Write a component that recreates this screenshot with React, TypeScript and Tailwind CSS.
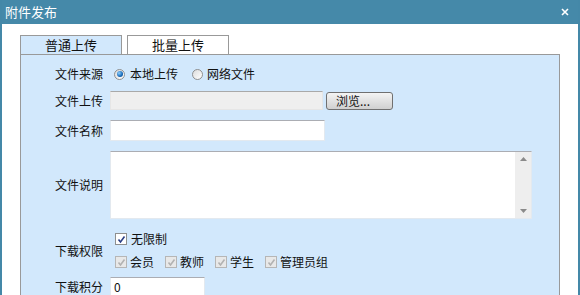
import React from "react";

const font = { fontFamily: '"Noto Sans CJK SC", "Noto Sans", sans-serif' };

const Radio = ({ checked }: { checked?: boolean }) => (
  <span className="flex h-[11px] w-[11px] shrink-0 items-center justify-center rounded-full border border-[#8f8f8f] bg-gradient-to-br from-[#dcdcdc] to-[#ffffff]">
    {checked && (
      <span className="h-[6px] w-[6px] rounded-full bg-[radial-gradient(circle_at_35%_35%,#8fd0ff,#1769b8_60%,#0b3f7a)]" />
    )}
  </span>
);

const Check = ({ disabled }: { disabled?: boolean }) => (
  <span
    className={`flex h-[12px] w-[12px] shrink-0 items-center justify-center border ${
      disabled ? "border-[#b6b6b6] bg-[#e8e8e8]" : "border-[#8e8f8f] bg-white"
    }`}
  >
    <svg width="9" height="9" viewBox="0 0 9 9">
      <path
        d="M1.5 4.5 L3.5 7 L7.5 1.5"
        fill="none"
        stroke={disabled ? "#b2b2b2" : "#2b3f86"}
        strokeWidth="1.6"
      />
    </svg>
  </span>
);

const Label = ({ children }: { children: React.ReactNode }) => (
  <div className="w-[89px] shrink-0 pr-[7px] text-right text-[12px] text-[#111]">{children}</div>
);

export default function App() {
  return (
    <div className="h-[295px] w-[580px] overflow-hidden bg-white" style={font}>
      <div className="flex h-[295px] flex-col border-x-2 border-[#4488a8]">
        {/* title bar */}
        <div className="flex h-[24px] shrink-0 items-center justify-between bg-[#4589a9] pl-[3px] pr-[9px]">
          <span className="text-[13px] text-white">附件发布</span>
          <svg width="8" height="8" viewBox="0 0 8 8">
            <path d="M1 1 L7 7 M7 1 L1 7" stroke="white" strokeWidth="1.6" />
          </svg>
        </div>

        <div className="pl-[18px] pt-[11px]">
          {/* tabs */}
          <div className="flex h-[19px] items-stretch">
            <div className="flex w-[102px] items-center justify-center border border-b-0 border-[#999] bg-[#d2e8fc] text-[13px] text-[#111]">
              普通上传
            </div>
            <div className="ml-[5px] flex w-[102px] items-center justify-center border border-b-0 border-[#999] bg-white text-[13px] text-[#111]">
              批量上传
            </div>
          </div>

          {/* panel */}
          <div className="h-[260px] w-[540px] border border-[#999] bg-[#d2e8fc] pt-[10px]">
            <div className="flex h-[18px] items-center">
              <Label>文件来源</Label>
              <div className="flex items-center text-[12px] text-[#111]">
                <span className="ml-[4px]">
                  <Radio checked />
                </span>
                <span className="ml-[5px]">本地上传</span>
                <span className="ml-[14px]">
                  <Radio />
                </span>
                <span className="ml-[4px]">网络文件</span>
              </div>
            </div>

            <div className="mt-[8px] flex h-[19px] items-center">
              <Label>文件上传</Label>
              <div className="h-[19px] w-[213px] border border-[#e6e6e6] border-t-[#a9a9a9] bg-[#efefef]" />
              <button className="ml-[3px] flex h-[18px] w-[67px] items-center rounded-[3px] border border-[#707070] bg-gradient-to-b from-[#f4f4f4] to-[#d0d0d0] pl-[9px] text-[12px] leading-none text-[#111]">
                浏览...
              </button>
            </div>

            <div className="mt-[10px] flex h-[21px] items-center">
              <Label>文件名称</Label>
              <div className="h-[21px] w-[215px] border border-[#e3e9ef] border-t-[#abadb3] bg-white" />
            </div>

            <div className="mt-[10px] flex h-[68px] items-center">
              <Label>文件说明</Label>
              <div className="flex h-[68px] w-[422px] border border-[#e3e9ef] border-t-[#abadb3] bg-white">
                <div className="flex-1" />
                <div className="flex w-[16px] flex-col items-center justify-between bg-[#eeeeee] py-[5px]">
                  <svg width="7" height="4" viewBox="0 0 7 4">
                    <path d="M3.5 0 L7 4 L0 4 Z" fill="#8a8a8a" />
                  </svg>
                  <svg width="7" height="4" viewBox="0 0 7 4">
                    <path d="M0 0 L7 0 L3.5 4 Z" fill="#8a8a8a" />
                  </svg>
                </div>
              </div>
            </div>

            <div className="mt-[14px] flex h-[35px] items-center">
              <Label>下载权限</Label>
              <div className="flex flex-col gap-[5px] text-[12px] text-[#111]">
                <div className="ml-[5px] flex items-center gap-[4px]">
                  <Check />
                  <span>无限制</span>
                </div>
                <div className="ml-[5px] flex items-center">
                  <Check disabled />
                  <span className="ml-[3px]">会员</span>
                  <span className="ml-[11px]">
                    <Check disabled />
                  </span>
                  <span className="ml-[3px]">教师</span>
                  <span className="ml-[11px]">
                    <Check disabled />
                  </span>
                  <span className="ml-[3px]">学生</span>
                  <span className="ml-[11px]">
                    <Check disabled />
                  </span>
                  <span className="ml-[3px]">管理员组</span>
                </div>
              </div>
            </div>

            <div className="mt-[9px] flex h-[20px] items-center">
              <Label>下载积分</Label>
              <div className="flex h-[20px] w-[95px] items-center border border-[#e3e9ef] border-t-[#abadb3] bg-white pl-[3px] text-[12px] text-[#111]">
                0
              </div>
            </div>
          </div>
        </div>
      </div>
    </div>
  );
}
